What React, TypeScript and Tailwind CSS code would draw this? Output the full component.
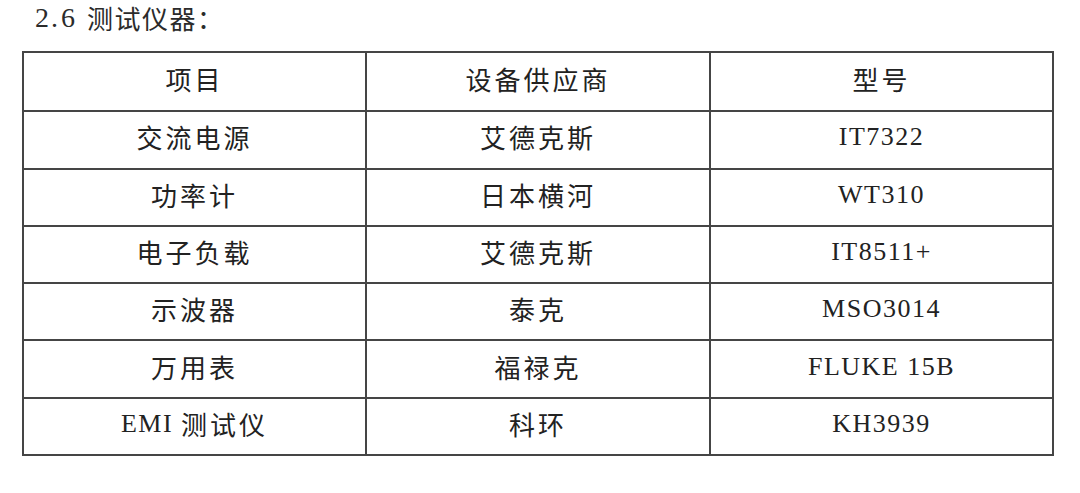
import React from "react";

const rows: [string, string, string][] = [
  ["项目", "设备供应商", "型号"],
  ["交流电源", "艾德克斯", "IT7322"],
  ["功率计", "日本横河", "WT310"],
  ["电子负载", "艾德克斯", "IT8511+"],
  ["示波器", "泰克", "MSO3014"],
  ["万用表", "福禄克", "FLUKE 15B"],
  ["EMI 测试仪", "科环", "KH3939"],
];

function Cell({ text }: { text: string }) {
  const parts = text.match(/[A-Za-z0-9+.\s]+|[^A-Za-z0-9+.\s]+/g) || [];
  return (
    <>
      {parts.map((p, i) =>
        /[A-Za-z0-9]/.test(p) ? (
          <span
            key={i}
            className="text-[26px] tracking-[1.5px] whitespace-pre"
            style={{ fontFamily: '"Liberation Serif", serif' }}
          >
            {p}
          </span>
        ) : (
          <span
            key={i}
            className="text-[26px] tracking-[3px]"
            style={{ fontFamily: '"Noto Sans CJK SC", sans-serif' }}
          >
            {p}
          </span>
        )
      )}
    </>
  );
}

export default function App() {
  return (
    <div className="w-[1080px] h-[493px] bg-white text-[#222] overflow-hidden">
      <div className="h-[51px] pl-[35px] pt-[1px] flex items-start text-[#2b2b2b]">
        {["2", ".", "6", " "].map((ch, i) => (
          <span
            key={i}
            className="inline-block w-[13px] text-center text-[28px] leading-[34px] whitespace-pre"
            style={{ fontFamily: '"Liberation Serif", serif' }}
          >
            {ch}
          </span>
        ))}
        <span
          className="text-[26px] leading-[34px] tracking-[1.5px]"
          style={{ fontFamily: '"Noto Sans CJK SC", sans-serif' }}
        >
          测试仪器：
        </span>
      </div>
      <div className="ml-[22px] w-[1032px] border-2 border-[#454545]">
        {rows.map((r, i) => (
          <div
            key={i}
            className={`grid grid-cols-[341px_344px_1fr] h-[57.3px] ${
              i > 0 ? "border-t-2 border-[#454545]" : ""
            }`}
          >
            {r.map((c, j) => (
              <div
                key={j}
                className={`flex items-center justify-center leading-none pb-[5px] ${
                  j > 0 ? "border-l-2 border-[#454545]" : ""
                }`}
              >
                <Cell text={c} />
              </div>
            ))}
          </div>
        ))}
      </div>
    </div>
  );
}
